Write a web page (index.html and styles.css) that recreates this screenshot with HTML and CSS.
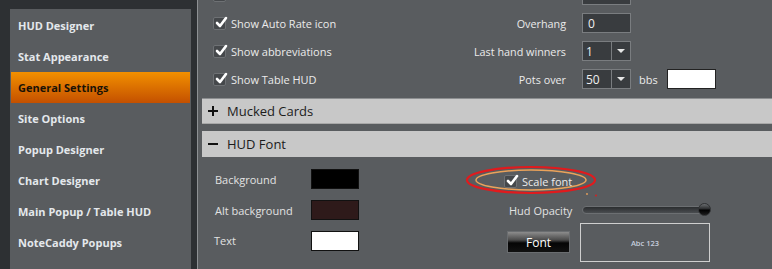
FILE: index.html
```html
<!DOCTYPE html>
<html>
<head>
<meta charset="utf-8">
<link rel="stylesheet" href="styles.css">
</head>
<body>
<div class="app">
  <nav class="sidebar">
    <div class="nav-item">HUD Designer</div>
    <div class="nav-item">Stat Appearance</div>
    <div class="nav-item active">General Settings</div>
    <div class="nav-item">Site Options</div>
    <div class="nav-item">Popup Designer</div>
    <div class="nav-item">Chart Designer</div>
    <div class="nav-item">Main Popup / Table HUD</div>
    <div class="nav-item">NoteCaddy Popups</div>
  </nav>
  <div class="divider"></div>
  <main class="content">
    <div class="settings">
      <label class="check"><span class="box"><svg viewBox="0 0 14 14"><path d="M3 7.5 L6 10.5 L12 2.5"/></svg></span></label>
      <span class="field-label"></span>
      <div class="ctl"><span class="input"></span></div>

      <label class="check"><span class="box"><svg viewBox="0 0 14 14"><path d="M3 7.5 L6 10.5 L12 2.5"/></svg></span>Show Auto Rate icon</label>
      <span class="field-label">Overhang</span>
      <div class="ctl"><span class="input">0</span></div>

      <label class="check"><span class="box"><svg viewBox="0 0 14 14"><path d="M3 7.5 L6 10.5 L12 2.5"/></svg></span>Show abbreviations</label>
      <span class="field-label">Last hand winners</span>
      <div class="ctl"><span class="select"><span class="val">1</span><span class="arrow"></span></span></div>

      <label class="check"><span class="box"><svg viewBox="0 0 14 14"><path d="M3 7.5 L6 10.5 L12 2.5"/></svg></span>Show Table HUD</label>
      <span class="field-label">Pots over</span>
      <div class="ctl"><span class="select"><span class="val">50</span><span class="arrow"></span></span><span class="unit">bbs</span><span class="white-box"></span></div>
    </div>

    <div class="section-head mucked"><span class="sign plus"></span>Mucked Cards</div>
    <div class="section-head open"><span class="sign minus"></span>HUD Font</div>

    <div class="font-body">
      <span class="lbl">Background</span>
      <span class="swatch sw-black"></span>
      <span class="spacer"></span>
      <div class="scale">
        <label class="check scale-check"><span class="box"><svg viewBox="0 0 14 14"><path d="M3 7.5 L6 10.5 L12 2.5"/></svg></span>Scale font</label>
        <svg class="annot" viewBox="0 0 140 34" width="140" height="34">
          <ellipse cx="65" cy="14" rx="64" ry="13" fill="none" stroke="#e11a1d" stroke-width="2.2"/>
          <ellipse cx="65" cy="14" rx="55" ry="10" fill="none" stroke="#eaa25a" stroke-width="1.5"/>
          <circle cx="121" cy="28" r="0.9" fill="#eaa25a"/>
          <circle cx="130" cy="29.5" r="0.9" fill="#e11a1d"/>
        </svg>
      </div>

      <span class="lbl">Alt background</span>
      <span class="swatch sw-alt"></span>
      <span class="spacer"></span>
      <span class="lbl opacity-lbl">Hud Opacity</span>
      <div class="slider"><span class="track"></span><span class="thumb"></span></div>

      <span class="lbl text-lbl">Text</span>
      <span class="swatch sw-white"></span>
      <span class="spacer"></span>
      <button class="font-btn">Font</button>
      <div class="preview">Abc 123</div>
    </div>
  </main>
</div>
</body>
</html>
```
FILE: styles.css
```css
* { box-sizing: border-box; }
html, body {
  margin: 0;
  padding: 0;
  width: 772px;
  height: 269px;
  overflow: hidden;
  background: #2d3033;
  font-family: "Open Sans", "Noto Sans", sans-serif;
}
.app {
  display: flex;
  height: 269px;
}
.sidebar {
  margin: 9px 0 0 10px;
  width: 181px;
  background: #595c5f;
  padding-top: 1px;
  display: flex;
  flex-direction: column;
}
.nav-item {
  height: 31px;
  margin: 0 1px;
  padding-left: 7px;
  display: flex;
  align-items: center;
  color: #e4e8ec;
  font-weight: 700;
  font-size: 11px;
}
.nav-item.active {
  background: linear-gradient(#f29000, #c45000);
  color: #1a1206;
}
.divider {
  width: 8px;
  margin-left: -1px;
  border-right: 1px solid #8e9194;
}
.content {
  flex: 1;
  background: #595c5f;
  color: #ebebeb;
  font-size: 11px;
}
.settings {
  margin-top: -19px;
  padding-left: 15px;
  display: grid;
  grid-template-columns: 260px 93px auto;
  grid-auto-rows: 28px;
  align-items: center;
}
.check {
  display: flex;
  align-items: center;
  gap: 5px;
  white-space: nowrap;
}
.box {
  width: 13px;
  height: 13px;
  background: #45484b;
  border: 1px solid #6e7174;
  border-radius: 2px;
  position: relative;
  flex: none;
}
.box svg {
  position: absolute;
  left: 0;
  top: -3px;
  width: 14px;
  height: 15px;
}
.box path {
  fill: none;
  stroke: #fff;
  stroke-width: 2.6;
  stroke-linecap: round;
  stroke-linejoin: round;
}
.field-label {
  text-align: right;
  white-space: nowrap;
  font-size: 10.8px;
}
.ctl {
  display: flex;
  align-items: center;
  padding-left: 16px;
}
.input, .select {
  width: 49px;
  height: 20px;
  background: #393c3f;
  border: 1px solid #7a7d80;
  display: flex;
  align-items: center;
  padding-left: 5px;
  color: #f0f0f0;
  font-size: 12px;
}
.select {
  padding-left: 3px;
  position: relative;
}
.select .val {
  flex: 1;
}
.select .arrow {
  width: 19px;
  height: 18px;
  border-left: 1px solid #7a7d80;
  position: relative;
}
.select .arrow::after {
  content: "";
  position: absolute;
  left: 5px;
  top: 7px;
  border-left: 4px solid transparent;
  border-right: 4px solid transparent;
  border-top: 4px solid #e6e6e6;
}
.unit {
  margin-left: 8px;
}
.white-box {
  margin-left: 9px;
  width: 49px;
  height: 20px;
  background: #fff;
  border: 1px solid #222;
}
.section-head {
  margin-left: 4px;
  background: #c8c8c8;
  color: #1c1c1c;
  font-size: 13px;
  display: flex;
  align-items: center;
}
.mucked {
  margin-top: 5px;
  height: 26px;
  border-top: 1px solid #8c8e90;
  border-bottom: 1px solid #a8a8a8;
}
.open {
  margin-top: 7px;
  height: 26px;
}
.sign {
  width: 25px;
  height: 16px;
  position: relative;
  flex: none;
}
.sign::after,
.sign.plus::before {
  content: "";
  position: absolute;
  left: 6px;
  top: 7px;
  width: 10px;
  height: 2px;
  background: #111;
}
.sign.plus::before {
  left: 10px;
  top: 3px;
  width: 2px;
  height: 10px;
}
.font-body {
  display: grid;
  grid-template-columns: 96px 48px 145px 76px 130px;
  grid-auto-rows: 20px;
  row-gap: 11px;
  padding: 12px 0 0 17px;
  align-items: center;
  font-size: 11px;
}
.lbl {
  white-space: nowrap;
  color: #e2e2e2;
}
.text-lbl {
  margin-left: -1px;
  margin-top: -2px;
}
.swatch {
  height: 20px;
  border: 1px solid #111;
}
.sw-black { background: #000; }
.sw-alt { background: #2e1a1a; }
.sw-white { background: #fff; }
.scale {
  grid-column: 4 / 6;
  position: relative;
  height: 20px;
}
.scale-check {
  height: 20px;
  margin-top: 2px;
}
.annot {
  position: absolute;
  left: -38px;
  top: -3px;
  overflow: visible;
}
.opacity-lbl {
  padding-left: 5px;
}
.slider {
  position: relative;
  height: 20px;
  margin-left: 2px;
  width: 129px;
}
.track {
  position: absolute;
  left: 0;
  right: 4px;
  top: 6px;
  height: 8px;
  border-radius: 4px;
  border: 1px solid #6c6f72;
  background: linear-gradient(#2b2d2f, #4a4d50);
}
.thumb {
  position: absolute;
  right: 0;
  top: 3px;
  width: 13px;
  height: 13px;
  border-radius: 50%;
  background: linear-gradient(#6a6d70 0%, #2a2c2e 45%, #000 55%, #1c1c1c 100%);
  border: 1px solid #303234;
}
.font-btn {
  margin-left: 3px;
  width: 63px;
  height: 22px;
  align-self: start;
  border: 1px solid #6a6d70;
  background: linear-gradient(#8c8c8c 0%, #4a4a4a 40%, #050505 55%, #111 100%);
  color: #fff;
  font-family: "Open Sans", sans-serif;
  font-size: 12px;
  padding: 0;
}
.preview {
  align-self: start;
  margin-top: -8px;
  width: 130px;
  height: 39px;
  border: 1.5px solid #cfcfcf;
  display: flex;
  align-items: center;
  justify-content: center;
  font-size: 7.5px;
  font-weight: 600;
  color: #c6cede;
}
```
